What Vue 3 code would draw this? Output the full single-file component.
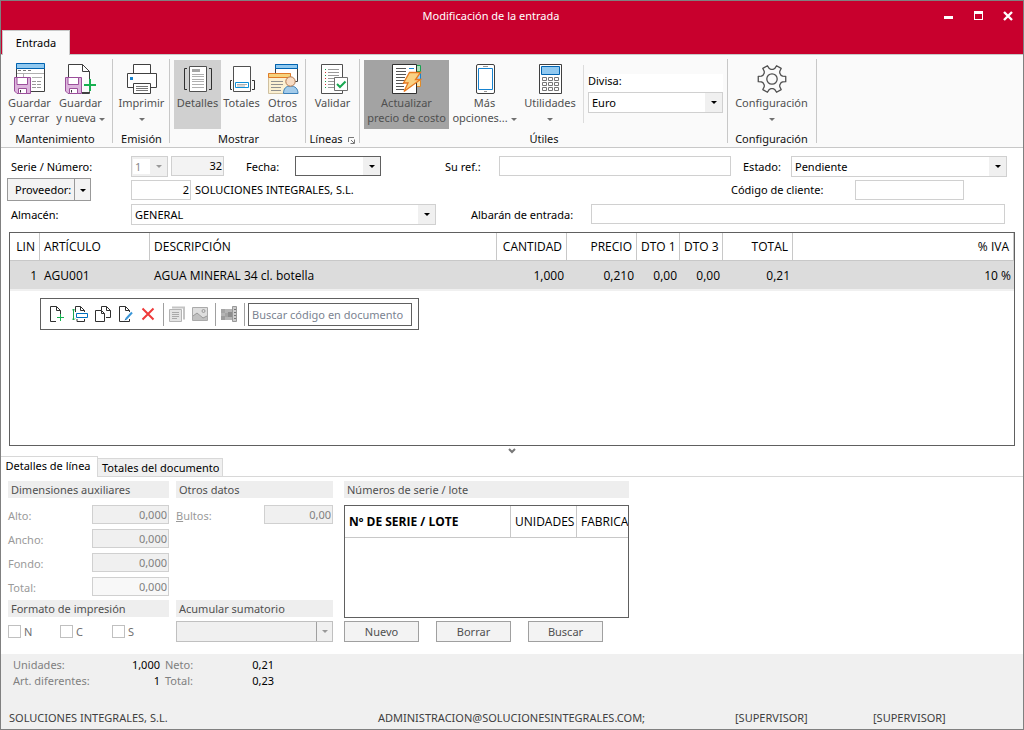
<script setup>
import { ref } from 'vue'

const serie = ref('1')
const almacen = ref('GENERAL')
const estado = ref('Pendiente')
const divisa = ref('Euro')

const gearPath = (() => {
  const points = []
  for (let i = 0; i < 6; i++) {
    const base = i * 60
    for (const [angle, radius] of [[-22, 9.8], [-15, 11], [-11, 14], [11, 14], [15, 11], [22, 9.8]]) {
      const a = ((base + angle) * Math.PI) / 180
      points.push(`${(16 + radius * Math.cos(a)).toFixed(2)} ${(16 + radius * Math.sin(a)).toFixed(2)}`)
    }
  }
  return `M${points.join('L')}Z`
})()

const columnas = [
  { key: 'lin', label: 'LIN', num: true },
  { key: 'articulo', label: 'ARTÍCULO' },
  { key: 'descripcion', label: 'DESCRIPCIÓN' },
  { key: 'cantidad', label: 'CANTIDAD', num: true },
  { key: 'precio', label: 'PRECIO', num: true },
  { key: 'dto1', label: 'DTO 1', num: true },
  { key: 'dto3', label: 'DTO 3', num: true },
  { key: 'total', label: 'TOTAL', num: true },
  { key: 'iva', label: '% IVA', num: true }
]
const lineas = [
  { lin: '1', articulo: 'AGU001', descripcion: 'AGUA MINERAL 34 cl. botella', cantidad: '1,000', precio: '0,210', dto1: '0,00', dto3: '0,00', total: '0,21', iva: '10 %' }
]
const dimensiones = [
  { id: 'alto', label: 'Alto:' },
  { id: 'ancho', label: 'Ancho:' },
  { id: 'fondo', label: 'Fondo:' },
  { id: 'total', label: 'Total:', light: true }
]
</script>

<template>
  <div class="window">
    <header class="titlebar">
      <div class="caption">
        <h1>Modificación de la entrada</h1>
        <button aria-label="Minimizar"><svg width="10" height="10"><path d="M1 5h9v3H1z" fill="#fff" /></svg></button>
        <button aria-label="Maximizar"><svg width="10" height="10"><path d="M1 0h9v9H1zM2 3v5h7V3z" fill="#fff" fill-rule="evenodd" /></svg></button>
        <button aria-label="Cerrar"><svg width="10" height="10"><path d="M1 1l8 8M9 1L1 9" stroke="#fff" stroke-width="2.4" /></svg></button>
      </div>
      <button class="ribbon-tab">Entrada</button>
    </header>

    <div class="ribbon">
      <section class="group">
        <div class="tools">
          <button class="tool w50">
            <svg class="icon" viewBox="0 0 32 32" fill="none">
              <path d="M2.5 1h28v27.500h-28z" fill="#fff" stroke="#404040" />
              <path d="M2.500 .5h28v5h-28z" fill="#91c9f0" stroke="#0063b1" />
              <path d="M4 7.500h3m2 0h3m2 0h3" stroke="#777" />
              <path d="M3 10.500h27M9.500 11v5" stroke="#b0b0b0" />
              <path d="M18 14.500h10" stroke="#b0b0b0" />
              <path d="M18 18.500h10M18 21.500h10M18 24.500h10" stroke="#999" stroke-dasharray="4 1" />
              <path d="M.5 14.500h16v16H3l-2.500-2.500z" fill="#ddb5dd" stroke="#9b4f9b" />
              <path d="M3 14.500h10.500v7H3z" fill="#fff" stroke="#9b4f9b" />
              <path d="M4.500 25.500h8v5h-8z" fill="#fff" stroke="#9b4f9b" />
              <path d="M6.500 27v2.500" stroke="#333" />
            </svg>
            <span>Guardar</span><span>y cerrar</span>
          </button>
          <button class="tool w50">
            <svg class="icon" viewBox="0 0 32 32" fill="none">
              <path d="M3.500 30.500v-29h14l7 7v21h-21z" fill="#fff" stroke="#404040" />
              <path d="M17.500 1.500v7h7" stroke="#404040" />
              <path d="M18 17h13v12H18z" fill="#fafafa" />
              <path d="M24 28.500h.5v2H17" stroke="#404040" />
              <path d="M25 16v12M19 22h12" stroke="#18b050" stroke-width="2" />
              <path d="M.5 14.500h16v16H3l-2.500-2.500z" fill="#ddb5dd" stroke="#9b4f9b" />
              <path d="M3 14.500h10.500v7H3z" fill="#fff" stroke="#9b4f9b" />
              <path d="M4.500 25.500h8v5h-8z" fill="#fff" stroke="#9b4f9b" />
              <path d="M6.500 27v2.500" stroke="#333" />
            </svg>
            <span>Guardar</span><span>y nueva <i class="caret"></i></span>
          </button>
        </div>
        <h2>Mantenimiento</h2>
      </section>

      <section class="group">
        <div class="tools">
          <button class="tool w50">
            <svg class="icon" viewBox="0 0 32 32" fill="none" stroke="#404040">
              <path d="M7.500 10.500v-9h17v9" fill="#fff" />
              <path d="M1.500 10.500h29v14h-29z" fill="#fff" />
              <path d="M7.500 20.500h17v10h-17z" fill="#fff" />
              <path d="M10 23.500h12M10 25.500h12M10 27.500h12" stroke="#777" />
              <path d="M4 14h3v3H4z" fill="#1683d0" stroke="none" />
            </svg>
            <span>Imprimir</span><span><i class="caret"></i></span>
          </button>
        </div>
        <h2>Emisión</h2>
      </section>

      <section class="group">
        <div class="tools">
          <button class="tool w47 on" aria-pressed="true">
            <svg class="icon" viewBox="0 0 32 32" fill="none">
              <path d="M7.500 3.500h17v25h-17z" fill="#fff" stroke="#505050" />
              <path d="M10 6h8v3h-8z" fill="#a6a6a6" />
              <path d="M10 11.500h12M10 13.500h12M10 16.500h12M10 18.500h12M10 21.500h12M10 24.500h12" stroke="#b0b0b0" />
              <path d="M5 5.500H2.500v21H5M27 5.500h2.500v21H27" stroke="#303030" />
            </svg>
            <span>Detalles</span>
          </button>
          <button class="tool w40">
            <svg class="icon" viewBox="0 0 32 32" fill="none">
              <path d="M7.500 3.500h17v25h-17z" fill="#fff" stroke="#505050" />
              <path d="M9.500 19.500h13v5h-13z" fill="#fff" stroke="#0f8fd8" />
              <path d="M11 21.500h10M11 23h8" stroke="#b0b0b0" />
              <path d="M6 17.500H4.500v9H6M26 17.500h2.500v9H26" stroke="#303030" />
            </svg>
            <span>Totales</span>
          </button>
          <button class="tool w40">
            <svg class="icon" viewBox="0 0 32 32" fill="none">
              <path d="M8.500 1.500h22v17h-22z" fill="#fff" stroke="#404040" />
              <path d="M8.500 1.500h22v4h-22z" fill="#91c9f0" stroke="#0063b1" />
              <path d="M1.500 10.500h22v20h-22z" fill="#fbf0d2" stroke="#cfc0a0" />
              <path d="M1.500 10.500h22v4h-22z" fill="#f6d27c" stroke="#e07b28" />
              <path d="M4 18.500h12M4 21.500h12M4 24.500h10M4 27.500h10" stroke="#909090" />
              <path d="M16.500 30.500c0-5 2.500-7.500 7-7.500s7.500 2.500 7.500 7.500z" fill="#a3cbea" stroke="#3a7fb8" />
              <circle cx="23.500" cy="18.500" r="4.700" fill="#f8dcc4" stroke="#b07850" />
            </svg>
            <span>Otros</span><span>datos</span>
          </button>
        </div>
        <h2>Mostrar</h2>
      </section>

      <section class="group">
        <div class="tools">
          <button class="tool w47">
            <svg class="icon" viewBox="0 0 32 32" fill="none">
              <path d="M4.500 1.500h21v29h-21z" fill="#fff" stroke="#505050" />
              <path d="M11 6.500h11M11 9.500h11M11 12.500h11M11 15.500h6M11 18.500h6M11 21.500h6M11 24.500h6" stroke="#999" />
              <path d="M8.500 6v1m0 5v1m0 5v1m0 5v1" stroke="#18a050" />
              <path d="M8.500 9v1m0 5v1m0 5v1" stroke="#d03030" />
              <path d="M17.500 14.500h13v13h-13z" fill="#fff" stroke="#707070" />
              <path d="M20 21l3 3 5.500-5.500" stroke="#18a850" stroke-width="2" />
            </svg>
            <span>Validar</span>
          </button>
        </div>
        <h2>Líneas
          <button class="launcher" aria-label="Opciones de líneas"><svg width="7" height="7" fill="none" stroke="#777"><path d="M.5 5V.5H6M3 3l3 3M6.500 2.500v4h-4" /></svg></button>
        </h2>
      </section>

      <section class="group wide">
        <div class="tools">
          <button class="tool w85 dark" aria-pressed="true">
            <svg class="icon" viewBox="0 0 32 32" fill="none">
              <path d="M25 2.500h4.500v6H25z" fill="#a8e0b8" stroke="#18a050" />
              <path d="M25 9.500h4.500v7H25z" fill="#a0d0f4" stroke="#1683d0" />
              <path d="M25 17.500h4.500v6H25z" fill="#fbe0a0" stroke="#e08a28" />
              <path d="M1.500 1.500h24v29h-24z" fill="#fff" stroke="#303030" />
              <path d="M5 5.500h10M5 8.500h10M5 11.500h10M5 14.500h9M5 17.500h9M5 20.500h8M5 23.500h8M5 26.500h8" stroke="#555" />
              <path d="M18 5.500h5" stroke="#1683d0" />
              <path d="M18.500 9.500h11l-5 7h5L13 28.500l4-8.500h-4.500z" fill="#fad183" stroke="#e87a20" stroke-width="1.300" />
            </svg>
            <span>Actualizar</span><span>precio de costo</span>
          </button>
          <button class="tool w70">
            <svg class="icon" viewBox="0 0 32 32" fill="none">
              <rect x="7.500" y="1.500" width="18" height="29" rx="1.500" fill="#fff" stroke="#404040" />
              <path d="M9.500 5.500h14v21h-14z" stroke="#1683d0" />
              <path d="M14 3.500h5M15 28.500h3" stroke="#999" />
            </svg>
            <span>Más</span><span>opciones... <i class="caret"></i></span>
          </button>
          <button class="tool w60">
            <svg class="icon" viewBox="0 0 32 32" fill="none">
              <path d="M5.500 1.500h22v29h-22z" fill="#fff" stroke="#404040" />
              <path d="M7.500 3.500h18v8h-18z" fill="#91c9f0" stroke="#0063b1" />
              <g stroke="#777">
                <path d="M8.500 14.500h4v3h-4zM14.500 14.500h4v3h-4zM20.500 14.500h4v3h-4z" />
                <path d="M8.500 19.500h4v3h-4zM14.500 19.500h4v3h-4zM20.500 19.500h4v3h-4z" />
                <path d="M8.500 24.500h4v3h-4zM14.500 24.500h4v3h-4zM20.500 24.500h4v3h-4z" />
              </g>
            </svg>
            <span>Utilidades</span><span><i class="caret"></i></span>
          </button>
          <div class="currency">
            <label for="divisa">Divisa:</label>
            <span class="select"><select id="divisa" v-model="divisa"><option>Euro</option></select><i></i></span>
          </div>
        </div>
        <h2>Útiles</h2>
      </section>

      <section class="group">
        <div class="tools">
          <button class="tool w85">
            <svg class="icon" viewBox="0 0 32 32" fill="none" stroke="#505050" stroke-linejoin="round" stroke-width="1.300">
              <path :d="gearPath" /><circle cx="16" cy="16" r="5.200" />
            </svg>
            <span>Configuración</span><span><i class="caret"></i></span>
          </button>
        </div>
        <h2>Configuración</h2>
      </section>
    </div>

    <main class="body">
      <form class="form" @submit.prevent>
        <div class="row">
          <label class="w120" for="serie">Serie / Número:</label>
          <span class="select off serie"><select id="serie" v-model="serie" disabled><option>1</option></select><i></i></span>
          <input class="numero num" aria-label="Número" value="32" readonly>
          <label class="w49" for="fecha">Fecha:</label>
          <span class="select date"><input id="fecha" type="text"><i></i></span>
          <label class="w54" for="ref">Su ref.:</label>
          <input id="ref" class="grow" type="text">
          <label class="w48" for="estado">Estado:</label>
          <span class="select estado"><select id="estado" v-model="estado"><option>Pendiente</option></select><i></i></span>
        </div>
        <div class="row middle">
          <div class="w124 supplier">
            <div class="split">
              <button type="button">Proveedor:</button><button type="button" aria-label="Más opciones de proveedor"><i class="caret black"></i></button>
            </div>
          </div>
          <input class="prov num" aria-label="Código de proveedor" value="2">
          <span class="grow">SOLUCIONES INTEGRALES, S.L.</span>
          <label class="w124" for="cliente">Código de cliente:</label>
          <input id="cliente" class="cliente" type="text">
        </div>
        <div class="row last">
          <label class="w120" for="almacen">Almacén:</label>
          <span class="select almacen"><select id="almacen" v-model="almacen"><option>GENERAL</option></select><i></i></span>
          <label class="w120" for="albaran">Albarán de entrada:</label>
          <input id="albaran" class="grow" type="text">
        </div>
      </form>

      <div class="grid-box">
        <table class="lines">
          <colgroup><col v-for="c in columnas" :key="c.key" :class="'c-' + c.key"></colgroup>
          <thead><tr><th v-for="c in columnas" :key="c.key" :class="{ num: c.num }">{{ c.label }}</th></tr></thead>
          <tbody>
            <tr v-for="l in lineas" :key="l.lin"><td v-for="c in columnas" :key="c.key" :class="{ num: c.num }">{{ l[c.key] }}</td></tr>
          </tbody>
        </table>
        <div class="toolbar">
          <div class="set">
            <button aria-label="Nueva línea"><svg viewBox="0 0 16 16" fill="none" stroke="#303030"><path d="M7 15.500H1.500V.5h6l4 4V8M7.500 .5v4h4" /><path d="M11.500 8v7M8 11.500h7" stroke="#18b050" /></svg></button>
            <button aria-label="Insertar línea"><svg viewBox="0 0 16 16" fill="none" stroke="#303030"><path d="M3.500 6V.5h5l4 4V6M8.500 .5v4h4M5 13v2.500h7.500V13" /><path d="M4.500 7.500h11v4h-11z" fill="#fff" stroke="#0070c0" /><path d="M1.500 3v11M0 4.500L1.500 3 3 4.500M0 12.500L1.500 14 3 12.500" stroke="#18a850" /></svg></button>
            <button aria-label="Duplicar línea"><svg viewBox="0 0 16 16" fill="none" stroke="#303030"><path d="M6.500 4V.5h5l4 4v7H11M11.500 .5v4h4" /><path d="M.5 4.500h6l3 3v8h-9zM6.500 4.500v3h3" fill="#fff" /></svg></button>
            <button aria-label="Modificar línea"><svg viewBox="0 0 16 16" fill="none" stroke="#303030"><path d="M11.500 13v2.500H1.500V.5h6l4 4V6M7.500 .5v4h4" /><path d="M14 6.500L8 13" stroke="#3a96d8" stroke-width="2" /><path d="M6.500 14.500l1-2 1.300 1.100z" fill="#1c6fb0" stroke="none" /></svg></button>
            <button aria-label="Borrar línea"><svg viewBox="0 0 16 16" fill="none"><path d="M1.500 2.500l11 11M12.500 2.500l-11 11" stroke="#ee3a3a" stroke-width="2" /></svg></button>
          </div>
          <div class="set">
            <button aria-label="Documentos" disabled><svg viewBox="0 0 16 16" fill="none"><path d="M3 1.500h12v12" stroke="#c4c4c4" stroke-width="2" /><path d="M.5 3.500h12v12H.5z" fill="#e4e4e4" stroke="#b4b4b4" /><path d="M3 6.500h7M3 8.500h7M3 10.500h7M3 12.500h5" stroke="#aaa" /></svg></button>
            <button aria-label="Imagen" disabled><svg viewBox="0 0 16 16" fill="none"><path d="M.5 1.500h15v13H.5z" fill="#dedede" stroke="#aaa" /><path d="M1 10l4-3 3 3 3 2 4-2v4H1z" fill="#c0c0c0" /><path d="M1 10l4-3 6 5 4-2" stroke="#999" /><circle cx="11.500" cy="5" r="1.500" stroke="#999" /></svg></button>
          </div>
          <div class="set">
            <button aria-label="Tallas y colores" disabled><svg viewBox="0 0 16 16"><path d="M0 3h11v11H0z" fill="#b4b4b4" /><path d="M0 3h4v4H0zM4 7h4v4H4z" fill="#a4a4a4" /><path d="M7 6h4v5H7z" fill="#8c8c8c" /><path d="M0 10h4v4H0z" fill="#9c9c9c" /><path d="M11.500 .5h4v15h-4z" fill="#ccc" stroke="#999" /><path d="M13 3.500h2M13 6.500h2M13 9.500h2M13 12.500h2" stroke="#777" /></svg></button>
          </div>
          <input type="text" aria-label="Buscar código en documento" placeholder="Buscar código en documento">
        </div>
      </div>
      <button class="collapse" aria-label="Contraer detalles"><svg width="8" height="6" fill="none" stroke="#777" stroke-width="2"><path d="M1 1l3 3 3-3" /></svg></button>
    </main>

    <nav class="tabs">
      <button class="active">Detalles de línea</button><button>Totales del documento</button>
    </nav>

    <section class="details">
      <div class="col dims">
        <h3>Dimensiones auxiliares</h3>
        <div v-for="d in dimensiones" :key="d.id" class="field">
          <label :for="d.id">{{ d.label }}</label>
          <input :id="d.id" class="num" :class="{ light: d.light }" value="0,000" disabled>
        </div>
        <h3 class="second">Formato de impresión</h3>
        <div class="checks">
          <label v-for="n in ['N', 'C', 'S']" :key="n"><input type="checkbox">{{ n }}</label>
        </div>
      </div>
      <div class="col otros">
        <h3>Otros datos</h3>
        <div class="field">
          <label for="bultos"><u>B</u>ultos:</label>
          <input id="bultos" class="num" value="0,00" disabled>
        </div>
        <h3 class="second push">Acumular sumatorio</h3>
        <span class="select off sum"><select aria-label="Acumular sumatorio" disabled><option></option></select><i></i></span>
      </div>
      <div class="col series">
        <h3>Números de serie / lote</h3>
        <div class="lot-box">
          <table>
            <thead><tr><th class="lot">Nº DE SERIE / LOTE</th><th class="units">UNIDADES</th><th>FABRICA</th></tr></thead>
          </table>
        </div>
        <div class="actions"><button>Nuevo</button><button>Borrar</button><button>Buscar</button></div>
      </div>
    </section>

    <footer class="foot">
      <dl>
        <dt>Unidades:</dt><dd>1,000</dd><dt>Neto:</dt><dd>0,21</dd>
        <dt>Art. diferentes:</dt><dd>1</dd><dt>Total:</dt><dd>0,23</dd>
      </dl>
      <div class="status">
        <span>SOLUCIONES INTEGRALES, S.L.</span><span>ADMINISTRACION@SOLUCIONESINTEGRALES.COM;</span><span>[SUPERVISOR]</span><span>[SUPERVISOR]</span>
      </div>
    </footer>
  </div>
</template>

<style>
body { margin: 0; }
</style>

<style scoped>
.window, .window * { box-sizing: border-box; }
.window { min-height: 100vh; display: flex; flex-direction: column; border: 1px solid #808080; background: #fff; color: #111; font: 11px/16px "Noto Sans", "Open Sans", sans-serif; white-space: nowrap; }
button, input, select { font: inherit; color: inherit; margin: 0; }
button { padding: 0; border: 0; background: none; }
h1, h2, h3 { margin: 0; font: inherit; }
svg { display: block; }

.titlebar { background: #c8002d; border-bottom: 1px solid #c8c8c8; }
.caption { display: flex; align-items: center; height: 29px; padding-left: 48px; color: #fff; }
.caption h1 { flex: 1; text-align: center; }
.caption button { width: 30px; height: 24px; display: grid; place-items: center; }
.ribbon-tab { display: block; width: 68px; height: 25px; margin: 0 0 -1px 1px; background: #fafafa; border: 1px solid #c8c8c8; border-bottom: 0; color: #000; }

.ribbon { display: flex; background: #fafafa; border-bottom: 1px solid #c8c8c8; padding: 4px 0; }
.group { padding: 1px 4px 0; border-right: 1px solid #c8c8c8; }
.group:first-child { padding: 1px 6px 0 3px; }
.group:nth-child(2), .group:nth-child(3) { padding-right: 2px; }
.group:nth-child(2) { padding-left: 3px; }
.group:nth-child(4) { padding: 1px 3px 0; }
.group.wide { padding-right: 3px; }
.group:last-child { padding: 1px 2px 0 1px; }
.group h2 { text-align: center; margin-top: 3px; height: 14px; line-height: 14px; margin-bottom: -3px; }
.tools { display: flex; }
.tool { height: 69px; padding: 3px 0 0; display: flex; flex-direction: column; align-items: center; color: #505050; line-height: 15px; }
.tool span { min-height: 15px; }
.icon { width: 32px; height: 32px; }
.tool.on { background: #d0d0d0; }
.tool.dark { background: #a3a3a3; }
.w40 { width: 41px; }
.w47 { width: 47px; }
.w50 { width: 51px; }
.w60 { width: 60px; }
.w70 { width: 71px; }
.w85 { width: 85px; }
.caret { display: inline-block; border: 3px solid transparent; border-top-color: #707070; border-bottom: 0; vertical-align: middle; }
.caret.black { border-top-color: #000; }
.launcher { display: inline-block; margin-left: 3px; vertical-align: -1px; }
.currency { height: 58px; margin: 5px 0 0 3px; padding: 9px 0 0 4px; border-left: 1px solid #dcdcdc; }
.currency label { display: block; height: 18px; width: 135px; line-height: 14px; background: #fff; color: #000; }
.currency .select { width: 135px; margin-right: 1px; }

.select { position: relative; display: flex; height: 21px; border: 1px solid #d0d0d0; background: #fff; color: #000; }
.select select, .select input { flex: 1; min-width: 0; width: 100%; height: 100%; border: 0; padding: 0 20px 0 3px; background: none; appearance: none; outline: 0; opacity: 1; }
.select i { position: absolute; top: 0; right: 0; bottom: 0; width: 17px; background: #f0f0f0; pointer-events: none; }
.select i::after { content: ""; position: absolute; left: 6px; top: 8px; border: 3px solid transparent; border-top-color: #000; border-bottom: 0; }
.select.off { background: #f0f0f0; color: #888; }
.select.off i::after { border-top-color: #999; }

.body { flex: 1; display: flex; flex-direction: column; }
.form { padding: 8px 16px 7px 10px; color: #000; }
.row { display: flex; height: 22px; }
.row label { line-height: 21px; flex: none; }
.row.middle { height: 23px; margin-bottom: 3px; align-items: center; padding-right: 43px; }
.row.last { height: 21px; padding-right: 2px; }
.row > input { height: 20px; min-width: 0; border: 1px solid #d0d0d0; background: #fff; padding: 0 3px; }
.row .grow { flex: 1; }
.num { text-align: right; }
.w120 { width: 120px; }
.w124 { width: 124px; }
.w49 { width: 49px; margin-left: 22px; }
.w54 { width: 54px; margin-left: 64px; }
.w48 { width: 48px; margin-left: 12px; }
.select.serie { width: 37px; margin-right: 3px; }
.serie select { background: #fff; margin: 2px 17px 2px 1px; height: 15px; padding: 0 2px; }
.row > .numero { width: 53px; background: #f3f3f3; padding: 0 1px 2px; }
.select.date { width: 86px; height: 20px; border-color: #606060; }
.select.estado { width: 216px; }
.select.almacen { width: 305px; margin-right: 35px; }
.supplier { display: flex; }
.split { display: flex; height: 23px; margin-left: -4px; border: 1px solid #999; background: #f3f3f3; }
.split button { padding: 0 3px 0 7px; }
.split button + button { width: 16px; padding: 0; border-left: 1px solid #999; }
.row > .prov { width: 60px; margin: 0 4px 0 -4px; padding-right: 1px; }
.row > .cliente { width: 109px; }

.grid-box { flex: 1; margin: 0 8px; border: 1px solid #606060; color: #000; min-height: 120px; }
table { border-collapse: separate; border-spacing: 0; font: 12px/16px "Open Sans", "Noto Sans", sans-serif; }
th { font-weight: 400; text-align: left; }
.lines { width: 100%; table-layout: fixed; }
.lines th { height: 28px; padding: 0 4px; border-right: 1px solid #c8c8c8; border-bottom: 1px solid #c8c8c8; }
.lines td { height: 30px; padding: 2px 4px 0; background: #dcdcdc; border-bottom: 2px solid #f0f0f0; }
.lines .num { text-align: right; }
.lines td.num { padding-right: 3px; }
.c-lin { width: 30px; }
.c-articulo { width: 110px; }
.c-descripcion { width: 347px; }
.c-cantidad, .c-precio, .c-total { width: 70px; }
.c-dto1, .c-dto3 { width: 43px; }
.toolbar { display: inline-flex; align-items: center; height: 32px; margin: 7px 0 0 30px; padding: 0 6px 0 8px; border: 1px solid #606060; background: #fff; }
.set { display: flex; align-items: center; gap: 7px; height: 23px; padding-right: 6px; margin-right: 5px; border-right: 1px solid #a0a0a0; }
.set:nth-child(2), .set:nth-child(3) { padding-right: 7px; }
.set:nth-child(3) { margin-right: 3px; }
.set svg { width: 16px; height: 16px; }
.toolbar input { width: 164px; height: 23px; border: 1px solid #606060; padding: 0 3px; background: #fff; }
.toolbar input::placeholder { color: #7b8391; opacity: 1; }
.collapse { height: 10px; display: grid; place-items: center; }

.tabs { display: flex; align-items: flex-end; border-bottom: 1px solid #d8d8d8; color: #000; }
.tabs button { height: 18px; padding: 0 4px; border: 1px solid #d8d8d8; border-bottom: 0; background: #f0f0f0; }
.tabs .active { width: 97px; height: 21px; padding: 0 6px 2px 4px; border-left: 0; margin-bottom: -1px; background: #fff; }
.tabs button + button { border-left: 0; width: 125px; }

.details { display: flex; padding: 4px 7px 12px; color: #505050; }
.col { display: flex; flex-direction: column; }
.col h3 { height: 17px; padding-left: 3px; line-height: 17px; background: #eee; margin-bottom: 7px; }
.col h3.second { margin-top: -1px; margin-bottom: 4px; }
.col h3.push { margin-top: auto; }
.dims { width: 161px; margin-right: 7px; }
.otros { width: 157px; margin-right: 11px; }
.series { width: 285px; }
.field { display: flex; justify-content: space-between; height: 24px; color: #9a9a9a; }
.field label { line-height: 22px; }
.field input { width: 77px; height: 19px; padding: 0 1px; border: 1px solid #d0d0d0; background: #f0f0f0; color: #808080; }
.field input.light { background: #f8f8f8; }
.otros .field input { width: 69px; }
.checks { display: flex; height: 21px; align-items: center; color: #707070; }
.checks label { display: flex; align-items: center; gap: 3px; width: 52px; }
.checks input { appearance: none; width: 13px; height: 13px; border: 1px solid #c0c0c0; background: #fff; }
.select.sum { border-color: #c0c0c0; }
.select.sum i { width: 16px; border-left: 1px solid #a0a0a0; }
.select.sum i::after { left: 5px; }
.lot-box { height: 113px; border: 1px solid #606060; overflow: hidden; color: #000; }
.lot-box table { width: 100%; table-layout: fixed; }
.lot-box th { height: 32px; padding: 0 0 0 4px; border-right: 1px solid #c8c8c8; border-bottom: 1px solid #c8c8c8; overflow: hidden; }
.lot-box th:last-child { border-right: 0; }
.lot-box .lot { width: 166px; font-weight: 700; }
.lot-box .units { width: 66px; }
.actions { display: flex; gap: 17px; margin-top: 3px; }
.actions button { width: 75px; height: 21px; border: 1px solid #a0a0a0; background: #f3f3f3; }

.foot { background: #f0f0f0; padding: 3px 8px; }
.foot dl { display: grid; grid-template-columns: 92px 55px 57px 57px; margin: 0 0 21px; padding-left: 4px; color: #808080; }
.foot dd { margin: 0; text-align: right; color: #000; }
.foot dt:nth-of-type(even) { padding-left: 5px; }
.status { display: grid; grid-template-columns: 369fr 357fr 138fr 142fr; color: #404040; }
</style>
